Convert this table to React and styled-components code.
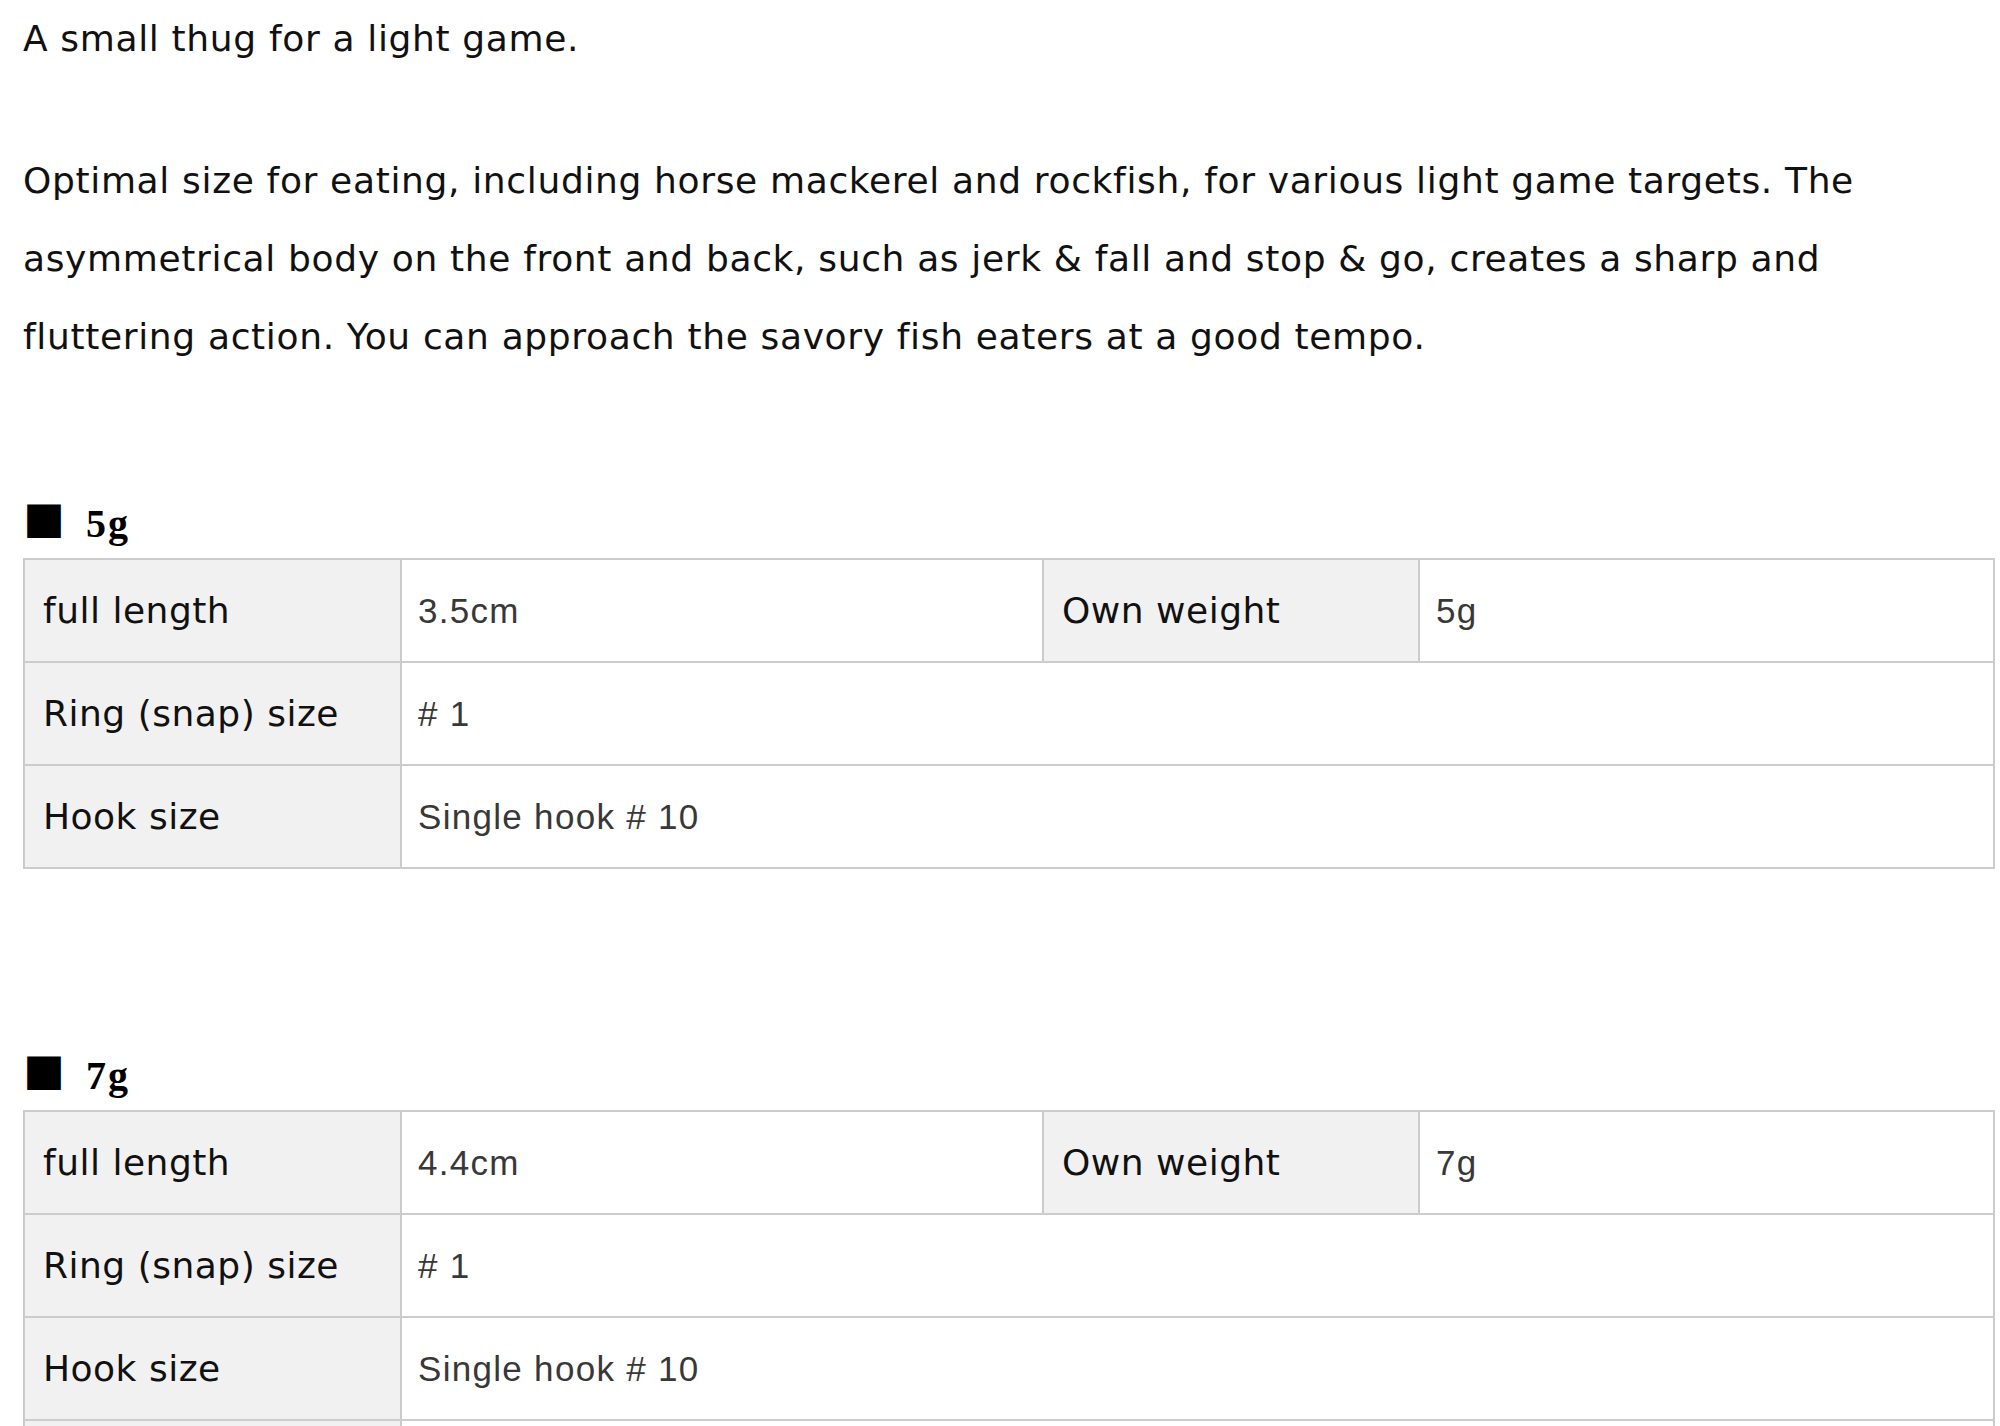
import React from 'react'
import styled, { createGlobalStyle } from 'styled-components'

const GlobalStyle = createGlobalStyle`
  html, body {
    margin: 0;
    padding: 0;
    background: #fff;
  }
  body {
    font-family: "DejaVu Sans", sans-serif;
    color: #111;
  }
`

const Page = styled.div`
  padding: 0 5px 0 23px;
`

const Lead = styled.p`
  margin: 0;
  font-size: 36px;
  line-height: 78px;
  letter-spacing: 0.65px;
  color: #111;
`

const Description = styled(Lead)`
  margin-top: 64px;
  max-width: 1900px;
`

const Section = styled.section`
  margin-top: 126px;

  & + & {
    margin-top: 185px;
  }
`

const Heading = styled.h3`
  margin: 0 0 12px;
  display: flex;
  align-items: baseline;
  height: 44px;
  line-height: 44px;
  font-family: "Liberation Serif", serif;
  font-weight: 700;
  font-size: 40px;
  letter-spacing: 2px;
  color: #000;
`

const Mark = styled.span`
  font-family: "Noto Sans CJK JP", "DejaVu Sans", sans-serif;
  font-size: 42px;
  line-height: 32px;
  font-weight: 400;
  margin-right: 21px;
  letter-spacing: 0;
`

const SpecTable = styled.table`
  width: 1972px;
  table-layout: fixed;
  border-collapse: collapse;
`

const Row = styled.tr`
  height: 103px;
`

const Label = styled.th`
  background: #f1f1f1;
  border: 2px solid #cccccc;
  padding: 0 18px;
  text-align: left;
  font-weight: 400;
  font-size: 36px;
  letter-spacing: 0.5px;
  color: #111;
  white-space: nowrap;
`

const Value = styled.td`
  border: 2px solid #cccccc;
  padding: 0 16px;
  font-family: "Liberation Sans", sans-serif;
  font-size: 35px;
  letter-spacing: 1.3px;
  color: #383838;
`

const specs = [
  {
    weight: '5g',
    length: '3.5cm',
    rows: [
      ['Ring (snap) size', '# 1'],
      ['Hook size', 'Single hook # 10'],
    ],
  },
  {
    weight: '7g',
    length: '4.4cm',
    rows: [
      ['Ring (snap) size', '# 1'],
      ['Hook size', 'Single hook # 10'],
      ['', ''],
    ],
  },
]

function Spec({ spec }) {
  return (
    <Section>
      <Heading>
        <Mark>■</Mark>
        {spec.weight}
      </Heading>
      <SpecTable>
        <colgroup>
          <col style={{ width: 377 }} />
          <col style={{ width: 642 }} />
          <col style={{ width: 376 }} />
          <col />
        </colgroup>
        <tbody>
          <Row>
            <Label>full length</Label>
            <Value>{spec.length}</Value>
            <Label>Own weight</Label>
            <Value>{spec.weight}</Value>
          </Row>
          {spec.rows.map(([label, value], i) => (
            <Row key={i}>
              <Label>{label}</Label>
              <Value colSpan={3}>{value}</Value>
            </Row>
          ))}
        </tbody>
      </SpecTable>
    </Section>
  )
}

export default function App() {
  return (
    <Page>
      <GlobalStyle />
      <Lead>A small thug for a light game.</Lead>
      <Description>
        Optimal size for eating, including horse mackerel and rockfish, for various light game targets. The
        asymmetrical body on the front and back, such as jerk &amp; fall and stop &amp; go, creates a sharp and
        fluttering action. You can approach the savory fish eaters at a good tempo.
      </Description>
      {specs.map(spec => (
        <Spec key={spec.weight} spec={spec} />
      ))}
    </Page>
  )
}
